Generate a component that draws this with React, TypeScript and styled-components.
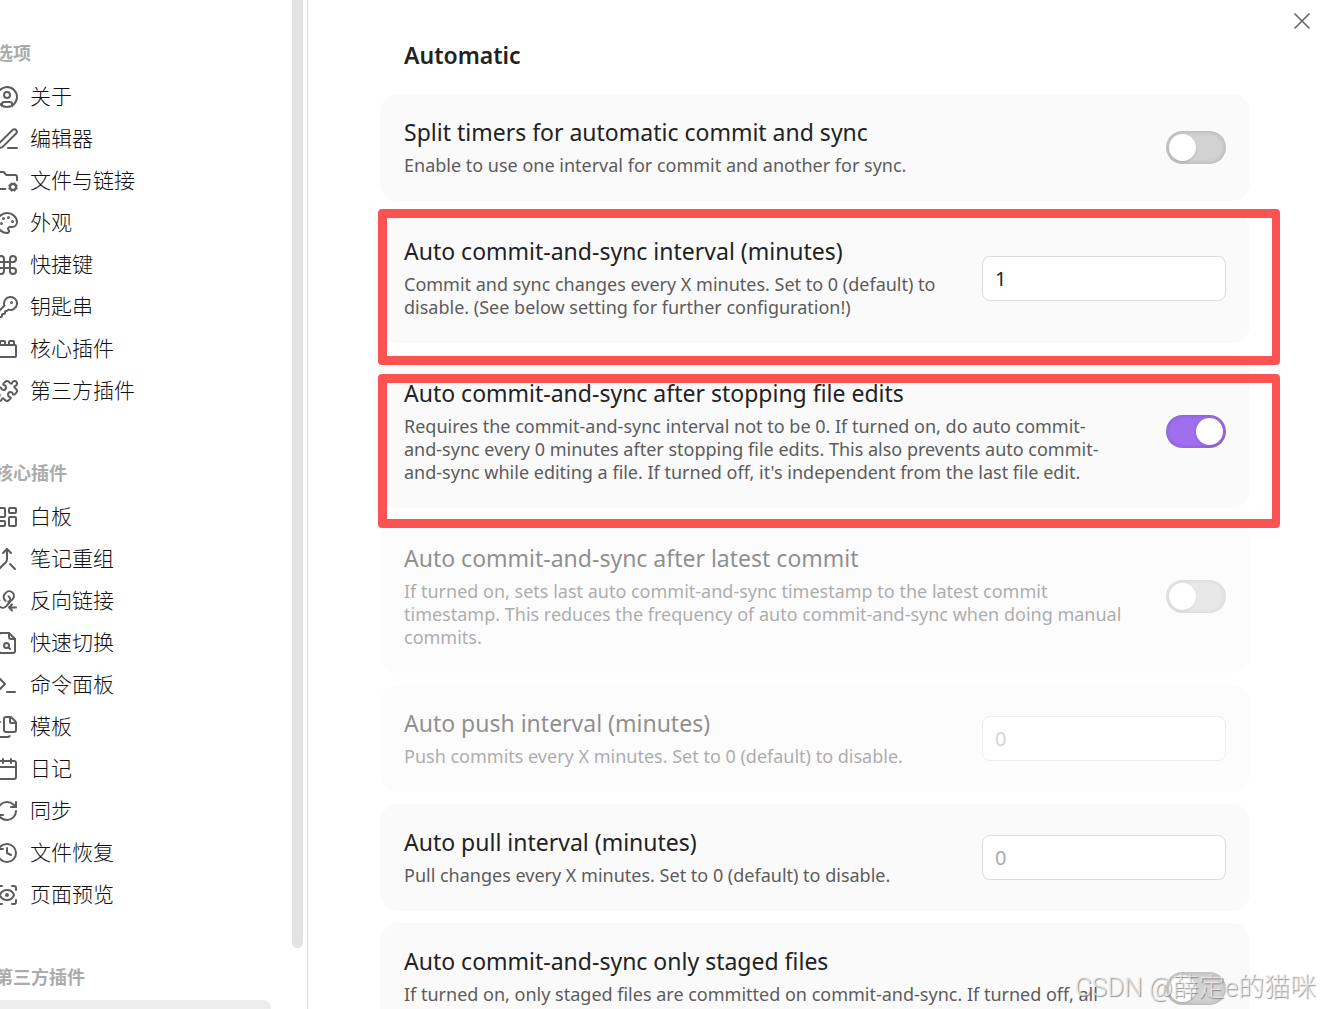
import React, { useState, type ReactNode } from "react";
import styled, { createGlobalStyle } from "styled-components";
import {
  Calendar,
  CircleUser,
  Command,
  Files,
  FolderCog,
  History,
  KeyRound,
  LayoutDashboard,
  Merge,
  Palette,
  Puzzle,
  RefreshCw,
  ScanEye,
  Terminal,
  ToyBrick,
  X,
} from "lucide-react";

const GlobalStyle = createGlobalStyle`
  *, *::before, *::after { box-sizing: border-box; }
  body {
    margin: 0;
    background: #fff;
    color: #222;
    font-family: "Noto Sans", "Noto Sans CJK SC", sans-serif;
  }
`;

const Window = styled.div`
  position: relative;
  display: flex;
  height: 100vh;
  overflow: hidden;
`;

const Sidebar = styled.aside`
  display: flex;
  flex: 0 0 308px;
  border-right: 1px solid #dcdcdc;
`;

const Nav = styled.nav`
  flex: 1;
  min-width: 0;
  padding-top: 40px;
  margin-left: -5px;
  margin-right: 21px;
`;

const ScrollTrack = styled.div`
  width: 11px;
  margin-right: 4px;
`;

const ScrollThumb = styled.div`
  height: 94%;
  background: #e3e3e3;
  border-radius: 0 0 6px 6px;
`;

const Group = styled.section`
  margin-bottom: 48px;
`;

const GroupTitle = styled.h2`
  margin: 0 0 12px;
  font-family: "Noto Sans CJK SC", sans-serif;
  font-size: 18px;
  font-weight: 700;
  line-height: 24px;
  color: #ababab;
`;

const List = styled.ul`
  margin: 0;
  padding: 0;
  list-style: none;
`;

const NavButton = styled.button<{ $active?: boolean }>`
  display: flex;
  align-items: center;
  gap: 11px;
  width: 100%;
  height: 42px;
  padding: 0;
  border: 0;
  border-radius: 8px;
  background: ${(p) => (p.$active ? "#ededed" : "transparent")};
  color: #111;
  font-family: "Noto Sans CJK SC", sans-serif;
  font-size: 21px;
  font-weight: 300;
  text-align: left;
  cursor: pointer;

  svg {
    flex: none;
    width: 24px;
    height: 24px;
    stroke-width: 2;
    color: #5c5c5c;
  }
`;

const NavLabel = styled.span`
  padding-bottom: 4px;
`;

const Main = styled.main`
  flex: 1;
  min-width: 0;
  padding: 39px 70px 0 72px;
`;

const SectionTitle = styled.h1`
  margin: 0 0 23px;
  padding: 0 24px;
  font-size: 23px;
  font-weight: 600;
  line-height: 32px;
`;

const Cards = styled.div`
  display: flex;
  flex-direction: column;
  gap: 12px;
`;

const Card = styled.div`
  position: relative;
`;

const CardBody = styled.div<{ $disabled?: boolean }>`
  display: flex;
  align-items: center;
  justify-content: space-between;
  gap: 44px;
  padding: 24px;
  border-radius: 18px;
  background: #fafafa;
  opacity: ${(p) => (p.$disabled ? 0.5 : 1)};
`;

const Info = styled.div`
  min-width: 0;
`;

const Name = styled.label`
  display: block;
  margin-bottom: 8px;
  font-size: 23px;
  line-height: 28px;
`;

const Description = styled.p`
  margin: 0;
  color: #5c5c5c;
  font-size: 18px;
  line-height: 23px;
`;

const Toggle = styled.input`
  flex: none;
  appearance: none;
  width: 60px;
  height: 33px;
  margin: 0;
  padding: 3px;
  border-radius: 17px;
  background: #d2d2d2;
  box-shadow: inset 0 0 4px 1px rgba(0, 0, 0, 0.14);
  cursor: pointer;

  &::before {
    content: "";
    display: block;
    width: 27px;
    height: 27px;
    border-radius: 50%;
    background: #fff;
    box-shadow: 0 1px 3px rgba(0, 0, 0, 0.15);
  }

  &:checked {
    background: #9f6ff0;
  }

  &:checked::before {
    margin-left: auto;
  }
`;

const NumberField = styled.input`
  flex: none;
  width: 244px;
  height: 45px;
  margin: 0;
  padding: 0 12px;
  border: 1px solid #dcdcdc;
  border-radius: 8px;
  background: #fff;
  color: #222;
  font-family: inherit;
  font-size: 20px;

  &::placeholder {
    color: #ababab;
    opacity: 1;
  }
`;

const Highlight = styled.div<{ $top: number; $bottom: number }>`
  position: absolute;
  z-index: 1;
  top: ${(p) => p.$top}px;
  bottom: ${(p) => p.$bottom}px;
  left: -2px;
  right: -30px;
  border: 9px solid #fb5252;
  border-right-width: 8px;
  border-radius: 4px;
  pointer-events: none;
`;

const CloseButton = styled.button`
  position: absolute;
  top: 7px;
  right: 4px;
  display: flex;
  padding: 0;
  border: 0;
  background: none;
  color: #6a6a6a;
  cursor: pointer;
`;

const Watermark = styled.span`
  position: absolute;
  z-index: 2;
  right: 4px;
  bottom: 4px;
  color: rgba(240, 240, 240, 0.75);
  font-family: Roboto, "Noto Sans CJK SC", sans-serif;
  font-size: 26px;
  font-weight: 300;
  line-height: 36px;
  text-shadow: 1px 1px 1px rgba(110, 110, 110, 0.75);
  pointer-events: none;
`;

const Stroke = ({ children }: { children: ReactNode }) => (
  <svg
    viewBox="0 0 24 24"
    fill="none"
    stroke="currentColor"
    strokeLinecap="round"
    strokeLinejoin="round"
    aria-hidden="true"
  >
    {children}
  </svg>
);

const PenIcon = () => (
  <Stroke>
    <path d="M13 21h9" />
    <path d="M17.8 2.8a2.5 2.5 0 0 1 3.5 3.5L7.5 20.1 2.5 21.5l1.4-5z" />
  </Stroke>
);

const BacklinkIcon = () => (
  <Stroke>
    <path d="M13.2 12.6a4.6 4.6 0 0 0 3.4-1.3l1-1.1a4.6 4.6 0 0 0-6.6-6.6l-1 1.1a4.6 4.6 0 0 0 .6 7.1" />
    <path d="M13.6 7.2a4.6 4.6 0 0 1 .4 6.8l-2.6 3.2a4.6 4.6 0 0 1-7-6" />
    <path d="M21 18.5h-7M17 15.5l-3 3 3 3" />
  </Stroke>
);

const FileSearchIcon = () => (
  <Stroke>
    <path d="M14 2H6a2 2 0 0 0-2 2v16a2 2 0 0 0 2 2h12a2 2 0 0 0 2-2V8z" />
    <path d="M14 2v4a2 2 0 0 0 2 2h4" />
    <circle cx="11.5" cy="14.5" r="2.5" />
    <path d="M13.3 16.3 15 18" />
  </Stroke>
);

const groups: { title: string; items: { label: string; icon: ReactNode }[] }[] = [
  {
    title: "选项",
    items: [
      { label: "关于", icon: <CircleUser /> },
      { label: "编辑器", icon: <PenIcon /> },
      { label: "文件与链接", icon: <FolderCog /> },
      { label: "外观", icon: <Palette /> },
      { label: "快捷键", icon: <Command /> },
      { label: "钥匙串", icon: <KeyRound /> },
      { label: "核心插件", icon: <ToyBrick /> },
      { label: "第三方插件", icon: <Puzzle /> },
    ],
  },
  {
    title: "核心插件",
    items: [
      { label: "白板", icon: <LayoutDashboard /> },
      { label: "笔记重组", icon: <Merge /> },
      { label: "反向链接", icon: <BacklinkIcon /> },
      { label: "快速切换", icon: <FileSearchIcon /> },
      { label: "命令面板", icon: <Terminal /> },
      { label: "模板", icon: <Files /> },
      { label: "日记", icon: <Calendar /> },
      { label: "同步", icon: <RefreshCw /> },
      { label: "文件恢复", icon: <History /> },
      { label: "页面预览", icon: <ScanEye /> },
    ],
  },
];

interface SettingProps {
  id: string;
  name: string;
  description: string;
  kind: "toggle" | "number";
  initial?: string | boolean;
  disabled?: boolean;
  highlight?: [number, number];
}

const settings: SettingProps[] = [
  {
    id: "split",
    name: "Split timers for automatic commit and sync",
    description: "Enable to use one interval for commit and another for sync.",
    kind: "toggle",
  },
  {
    id: "interval",
    name: "Auto commit-and-sync interval (minutes)",
    description:
      "Commit and sync changes every X minutes. Set to 0 (default) to disable. (See below setting for further configuration!)",
    kind: "number",
    initial: "1",
    highlight: [-4, -22],
  },
  {
    id: "after-edits",
    name: "Auto commit-and-sync after stopping file edits",
    description:
      "Requires the commit-and-sync interval not to be 0. If turned on, do auto commit-and-sync every 0 minutes after stopping file edits. This also prevents auto commit-and-sync while editing a file. If turned off, it's independent from the last file edit.",
    kind: "toggle",
    initial: true,
    highlight: [19, -20],
  },
  {
    id: "after-commit",
    name: "Auto commit-and-sync after latest commit",
    description:
      "If turned on, sets last auto commit-and-sync timestamp to the latest commit timestamp. This reduces the frequency of auto commit-and-sync when doing manual commits.",
    kind: "toggle",
    disabled: true,
  },
  {
    id: "push",
    name: "Auto push interval (minutes)",
    description: "Push commits every X minutes. Set to 0 (default) to disable.",
    kind: "number",
    disabled: true,
  },
  {
    id: "pull",
    name: "Auto pull interval (minutes)",
    description: "Pull changes every X minutes. Set to 0 (default) to disable.",
    kind: "number",
  },
  {
    id: "staged",
    name: "Auto commit-and-sync only staged files",
    description:
      "If turned on, only staged files are committed on commit-and-sync. If turned off, all changed files are committed.",
    kind: "toggle",
  },
];

function Setting({ id, name, description, kind, initial, disabled, highlight }: SettingProps) {
  const [on, setOn] = useState(initial === true);
  const [value, setValue] = useState(typeof initial === "string" ? initial : "");
  return (
    <Card>
      <CardBody $disabled={disabled}>
        <Info>
          <Name htmlFor={id}>{name}</Name>
          <Description>{description}</Description>
        </Info>
        {kind === "toggle" ? (
          <Toggle
            id={id}
            type="checkbox"
            role="switch"
            checked={on}
            disabled={disabled}
            onChange={(e) => setOn(e.target.checked)}
          />
        ) : (
          <NumberField
            id={id}
            type="text"
            inputMode="numeric"
            placeholder="0"
            value={value}
            disabled={disabled}
            onChange={(e) => setValue(e.target.value)}
          />
        )}
      </CardBody>
      {highlight && <Highlight $top={highlight[0]} $bottom={highlight[1]} />}
    </Card>
  );
}

export default function App() {
  return (
    <>
      <GlobalStyle />
      <Window>
        <Sidebar>
          <Nav>
            {groups.map((group) => (
              <Group key={group.title}>
                <GroupTitle>{group.title}</GroupTitle>
                <List>
                  {group.items.map((item) => (
                    <li key={item.label}>
                      <NavButton type="button">
                        {item.icon}
                        <NavLabel>{item.label}</NavLabel>
                      </NavButton>
                    </li>
                  ))}
                </List>
              </Group>
            ))}
            <Group>
              <GroupTitle>第三方插件</GroupTitle>
              <List>
                <li>
                  <NavButton type="button" $active aria-current="page" />
                </li>
              </List>
            </Group>
          </Nav>
          <ScrollTrack>
            <ScrollThumb />
          </ScrollTrack>
        </Sidebar>
        <Main>
          <SectionTitle>Automatic</SectionTitle>
          <Cards>
            {settings.map((s) => (
              <Setting key={s.id} {...s} />
            ))}
          </Cards>
        </Main>
        <CloseButton type="button" aria-label="Close">
          <X size={28} strokeWidth={1.5} />
        </CloseButton>
        <Watermark>CSDN @薛定e的猫咪</Watermark>
      </Window>
    </>
  );
}
